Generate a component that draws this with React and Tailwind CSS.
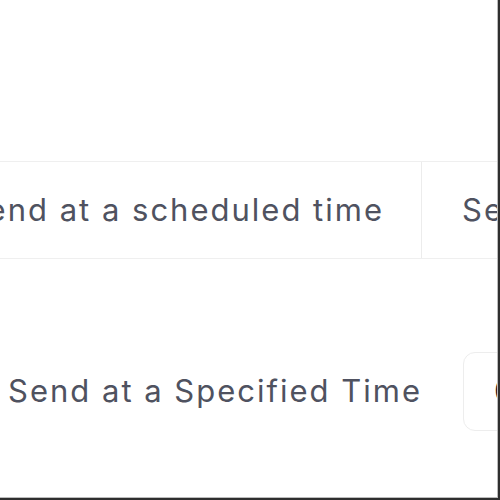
export default function App() {
  return (
    <div className="w-[500px] h-[500px] bg-white overflow-hidden border-r-2 border-b-2 border-[#2f2f2f]">
      <div className="w-full h-full overflow-hidden border-r border-b border-[#bcbcbc] font-['Inter','Liberation_Sans',sans-serif] text-[31px] tracking-[2px] text-[#4f5260]">
        <div className="pt-[161px]">
          <div className="flex h-[98px] ml-[-80px] w-[700px] border-y border-[#efefef]">
            <div className="w-[502px] shrink-0 flex items-center justify-end pr-[37px] border-r border-[#ececec] whitespace-nowrap">
              Send at a scheduled time
            </div>
            <div className="flex items-center pl-[40px] whitespace-nowrap">
              Send immediately
            </div>
          </div>
        </div>
        <div className="flex items-center mt-[93px] h-[79px] w-[800px]">
          <div className="w-[463px] shrink-0 pl-[8px] whitespace-nowrap">
            Send at a Specified Time
          </div>
          <div className="h-[79px] w-[300px] rounded-xl border border-[#ededed] flex items-center pl-[30px] text-[#1b1b22] whitespace-nowrap">
            00:00:00
          </div>
        </div>
      </div>
    </div>
  );
}
